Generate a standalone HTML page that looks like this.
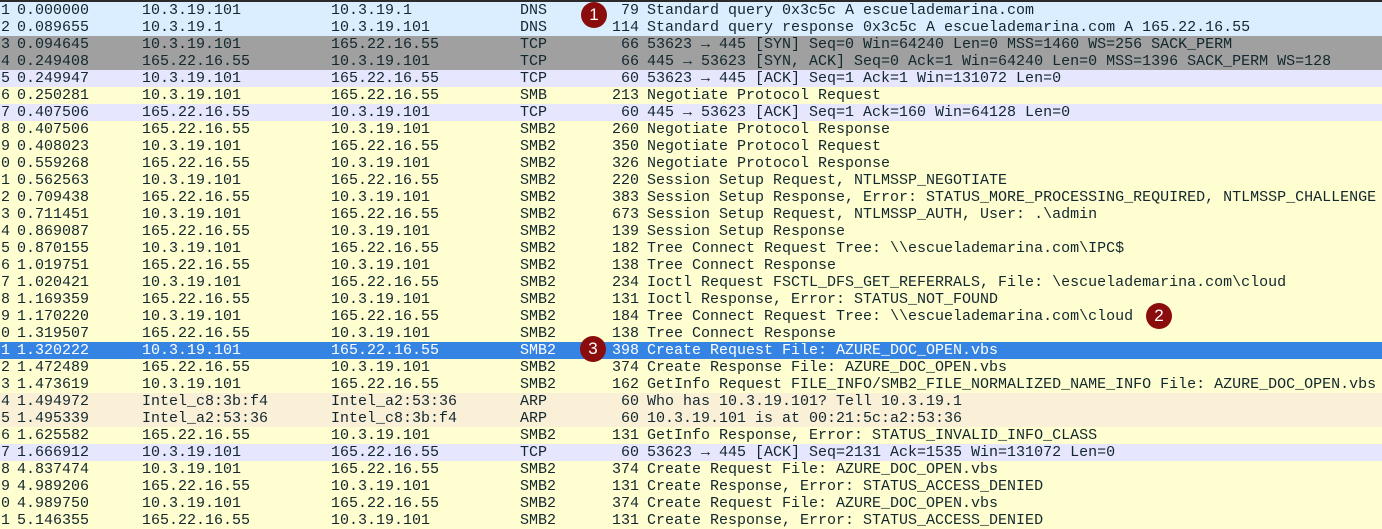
<!DOCTYPE html><html><head><style>
body{margin:0;width:1382px;height:528px;overflow:hidden;background:#fefed0;font-family:"Liberation Mono","DejaVu Sans Mono",monospace;font-size:15px;color:#12272e;}
.top{height:2px;background:#2b2b2b}
.r{height:17px;line-height:17px;position:relative;white-space:pre}
.r span{position:absolute;top:0}
.a{left:1px}.b{left:17px}.c{left:142px}.d{left:331px}.e{left:520px}.f{right:743px;text-align:right}.g{left:647px}
.dns{background:#daeeff}.syn{background:#a0a0a0}.tcp{background:#e7e6ff}.smb{background:#fefed0}.arp{background:#faf0d7}.sel{background:#3584e4;color:#fff}
.o{position:absolute;width:26px;height:26px;border-radius:50%;background:#8a0c0c;color:#fff;font-family:"Liberation Sans",sans-serif;font-size:17px;line-height:26px;text-align:center;z-index:5}
</style></head><body><div class="top"></div>
<div class="r dns"><span class="a">1</span><span class="b">0.000000</span><span class="c">10.3.19.101</span><span class="d">10.3.19.1</span><span class="e">DNS</span><span class="f">79</span><span class="g">Standard query 0x3c5c A escuelademarina.com</span></div>
<div class="r dns"><span class="a">2</span><span class="b">0.089655</span><span class="c">10.3.19.1</span><span class="d">10.3.19.101</span><span class="e">DNS</span><span class="f">114</span><span class="g">Standard query response 0x3c5c A escuelademarina.com A 165.22.16.55</span></div>
<div class="r syn"><span class="a">3</span><span class="b">0.094645</span><span class="c">10.3.19.101</span><span class="d">165.22.16.55</span><span class="e">TCP</span><span class="f">66</span><span class="g">53623 → 445 [SYN] Seq=0 Win=64240 Len=0 MSS=1460 WS=256 SACK_PERM</span></div>
<div class="r syn"><span class="a">4</span><span class="b">0.249408</span><span class="c">165.22.16.55</span><span class="d">10.3.19.101</span><span class="e">TCP</span><span class="f">66</span><span class="g">445 → 53623 [SYN, ACK] Seq=0 Ack=1 Win=64240 Len=0 MSS=1396 SACK_PERM WS=128</span></div>
<div class="r tcp"><span class="a">5</span><span class="b">0.249947</span><span class="c">10.3.19.101</span><span class="d">165.22.16.55</span><span class="e">TCP</span><span class="f">60</span><span class="g">53623 → 445 [ACK] Seq=1 Ack=1 Win=131072 Len=0</span></div>
<div class="r smb"><span class="a">6</span><span class="b">0.250281</span><span class="c">10.3.19.101</span><span class="d">165.22.16.55</span><span class="e">SMB</span><span class="f">213</span><span class="g">Negotiate Protocol Request</span></div>
<div class="r tcp"><span class="a">7</span><span class="b">0.407506</span><span class="c">165.22.16.55</span><span class="d">10.3.19.101</span><span class="e">TCP</span><span class="f">60</span><span class="g">445 → 53623 [ACK] Seq=1 Ack=160 Win=64128 Len=0</span></div>
<div class="r smb"><span class="a">8</span><span class="b">0.407506</span><span class="c">165.22.16.55</span><span class="d">10.3.19.101</span><span class="e">SMB2</span><span class="f">260</span><span class="g">Negotiate Protocol Response</span></div>
<div class="r smb"><span class="a">9</span><span class="b">0.408023</span><span class="c">10.3.19.101</span><span class="d">165.22.16.55</span><span class="e">SMB2</span><span class="f">350</span><span class="g">Negotiate Protocol Request</span></div>
<div class="r smb"><span class="a">0</span><span class="b">0.559268</span><span class="c">165.22.16.55</span><span class="d">10.3.19.101</span><span class="e">SMB2</span><span class="f">326</span><span class="g">Negotiate Protocol Response</span></div>
<div class="r smb"><span class="a">1</span><span class="b">0.562563</span><span class="c">10.3.19.101</span><span class="d">165.22.16.55</span><span class="e">SMB2</span><span class="f">220</span><span class="g">Session Setup Request, NTLMSSP_NEGOTIATE</span></div>
<div class="r smb"><span class="a">2</span><span class="b">0.709438</span><span class="c">165.22.16.55</span><span class="d">10.3.19.101</span><span class="e">SMB2</span><span class="f">383</span><span class="g">Session Setup Response, Error: STATUS_MORE_PROCESSING_REQUIRED, NTLMSSP_CHALLENGE</span></div>
<div class="r smb"><span class="a">3</span><span class="b">0.711451</span><span class="c">10.3.19.101</span><span class="d">165.22.16.55</span><span class="e">SMB2</span><span class="f">673</span><span class="g">Session Setup Request, NTLMSSP_AUTH, User: .\admin</span></div>
<div class="r smb"><span class="a">4</span><span class="b">0.869087</span><span class="c">165.22.16.55</span><span class="d">10.3.19.101</span><span class="e">SMB2</span><span class="f">139</span><span class="g">Session Setup Response</span></div>
<div class="r smb"><span class="a">5</span><span class="b">0.870155</span><span class="c">10.3.19.101</span><span class="d">165.22.16.55</span><span class="e">SMB2</span><span class="f">182</span><span class="g">Tree Connect Request Tree: \\escuelademarina.com\IPC$</span></div>
<div class="r smb"><span class="a">6</span><span class="b">1.019751</span><span class="c">165.22.16.55</span><span class="d">10.3.19.101</span><span class="e">SMB2</span><span class="f">138</span><span class="g">Tree Connect Response</span></div>
<div class="r smb"><span class="a">7</span><span class="b">1.020421</span><span class="c">10.3.19.101</span><span class="d">165.22.16.55</span><span class="e">SMB2</span><span class="f">234</span><span class="g">Ioctl Request FSCTL_DFS_GET_REFERRALS, File: \escuelademarina.com\cloud</span></div>
<div class="r smb"><span class="a">8</span><span class="b">1.169359</span><span class="c">165.22.16.55</span><span class="d">10.3.19.101</span><span class="e">SMB2</span><span class="f">131</span><span class="g">Ioctl Response, Error: STATUS_NOT_FOUND</span></div>
<div class="r smb"><span class="a">9</span><span class="b">1.170220</span><span class="c">10.3.19.101</span><span class="d">165.22.16.55</span><span class="e">SMB2</span><span class="f">184</span><span class="g">Tree Connect Request Tree: \\escuelademarina.com\cloud</span></div>
<div class="r smb"><span class="a">0</span><span class="b">1.319507</span><span class="c">165.22.16.55</span><span class="d">10.3.19.101</span><span class="e">SMB2</span><span class="f">138</span><span class="g">Tree Connect Response</span></div>
<div class="r sel"><span class="a">1</span><span class="b">1.320222</span><span class="c">10.3.19.101</span><span class="d">165.22.16.55</span><span class="e">SMB2</span><span class="f">398</span><span class="g">Create Request File: AZURE_DOC_OPEN.vbs</span></div>
<div class="r smb"><span class="a">2</span><span class="b">1.472489</span><span class="c">165.22.16.55</span><span class="d">10.3.19.101</span><span class="e">SMB2</span><span class="f">374</span><span class="g">Create Response File: AZURE_DOC_OPEN.vbs</span></div>
<div class="r smb"><span class="a">3</span><span class="b">1.473619</span><span class="c">10.3.19.101</span><span class="d">165.22.16.55</span><span class="e">SMB2</span><span class="f">162</span><span class="g">GetInfo Request FILE_INFO/SMB2_FILE_NORMALIZED_NAME_INFO File: AZURE_DOC_OPEN.vbs</span></div>
<div class="r arp"><span class="a">4</span><span class="b">1.494972</span><span class="c">Intel_c8:3b:f4</span><span class="d">Intel_a2:53:36</span><span class="e">ARP</span><span class="f">60</span><span class="g">Who has 10.3.19.101? Tell 10.3.19.1</span></div>
<div class="r arp"><span class="a">5</span><span class="b">1.495339</span><span class="c">Intel_a2:53:36</span><span class="d">Intel_c8:3b:f4</span><span class="e">ARP</span><span class="f">60</span><span class="g">10.3.19.101 is at 00:21:5c:a2:53:36</span></div>
<div class="r smb"><span class="a">6</span><span class="b">1.625582</span><span class="c">165.22.16.55</span><span class="d">10.3.19.101</span><span class="e">SMB2</span><span class="f">131</span><span class="g">GetInfo Response, Error: STATUS_INVALID_INFO_CLASS</span></div>
<div class="r tcp"><span class="a">7</span><span class="b">1.666912</span><span class="c">10.3.19.101</span><span class="d">165.22.16.55</span><span class="e">TCP</span><span class="f">60</span><span class="g">53623 → 445 [ACK] Seq=2131 Ack=1535 Win=131072 Len=0</span></div>
<div class="r smb"><span class="a">8</span><span class="b">4.837474</span><span class="c">10.3.19.101</span><span class="d">165.22.16.55</span><span class="e">SMB2</span><span class="f">374</span><span class="g">Create Request File: AZURE_DOC_OPEN.vbs</span></div>
<div class="r smb"><span class="a">9</span><span class="b">4.989206</span><span class="c">165.22.16.55</span><span class="d">10.3.19.101</span><span class="e">SMB2</span><span class="f">131</span><span class="g">Create Response, Error: STATUS_ACCESS_DENIED</span></div>
<div class="r smb"><span class="a">0</span><span class="b">4.989750</span><span class="c">10.3.19.101</span><span class="d">165.22.16.55</span><span class="e">SMB2</span><span class="f">374</span><span class="g">Create Request File: AZURE_DOC_OPEN.vbs</span></div>
<div class="r smb"><span class="a">1</span><span class="b">5.146355</span><span class="c">165.22.16.55</span><span class="d">10.3.19.101</span><span class="e">SMB2</span><span class="f">131</span><span class="g">Create Response, Error: STATUS_ACCESS_DENIED</span></div>
<div class="o" style="left:581px;top:2px">1</div>
<div class="o" style="left:1146px;top:303px">2</div>
<div class="o" style="left:580px;top:336px">3</div>
</body></html>
